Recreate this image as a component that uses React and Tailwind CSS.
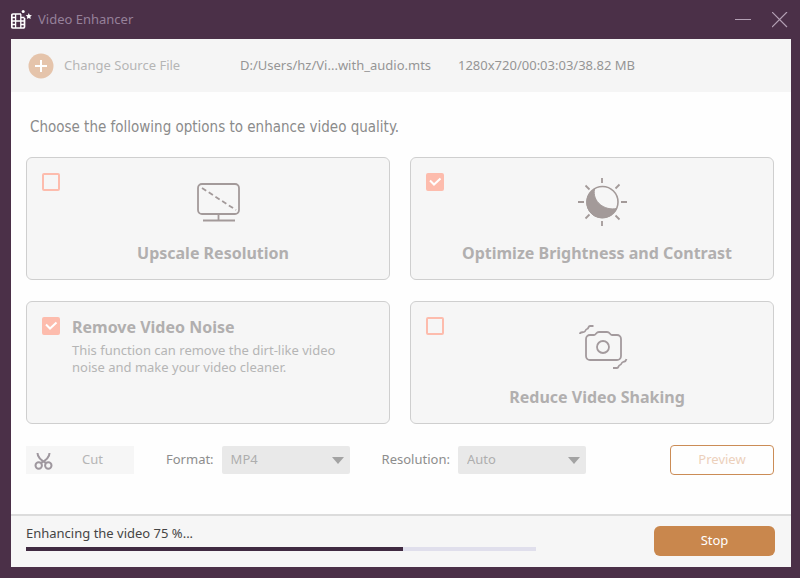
import React, { useState } from 'react';

const AppLogo = () => (
  <svg width="22" height="22" viewBox="0 0 22 22" fill="none" aria-hidden="true">
    <path d="M10 5H2a1.200 1.200 0 0 0-1.200 1.200v11.600A1.200 1.200 0 0 0 2 19h10.300a1.200 1.200 0 0 0 1.200-1.200V9" stroke="#fff" strokeWidth="1.700" />
    <path d="M4.600 5v14M9.800 5v14M4.600 12h5.200M1 8.500h3.600M1 12h3.600M1 15.500h3.600M9.800 8.500h3.700M9.800 12h3.700M9.800 15.500h3.700" stroke="#fff" strokeWidth="1.300" />
    <circle cx="12.200" cy="2.600" r="1.500" fill="#fff" />
    <path d="m17.800 4 .9 2 2.200.3-1.600 1.500.4 2.200-1.900-1.100-1.900 1.100.4-2.200-1.600-1.500 2.200-.3z" fill="#fff" />
  </svg>
);

const MonitorIcon = () => (
  <svg width="48" height="48" viewBox="0 0 48 48" fill="none" stroke="#a39a9a" strokeWidth="1.800" aria-hidden="true">
    <rect x="4" y="6" width="41" height="30" rx="4" />
    <path d="M8 10l34 22" strokeDasharray="5 3" />
    <path d="M24.500 36v6M9 42.500h32" />
  </svg>
);

const BrightnessIcon = () => (
  <svg width="48" height="48" viewBox="0 0 48 48" fill="none" stroke="#a39a99" strokeWidth="1.800" className="overflow-visible" aria-hidden="true">
    <circle cx="24.500" cy="24" r="15.500" strokeWidth="1.600" />
    <path d="M16.500 11A15.500 15.500 0 1 0 38.500 30.500C27 33 14 24 16.500 11z" fill="#a39a99" strokeWidth="1" />
    <path d="M24 0v5M24 43v5M0 24h6M43 24h6M7.500 7.500l4 4M37.500 37.500l4 4M7.500 40.500l4-4M37.500 10.500l4-4" />
  </svg>
);

const ShakeIcon = () => (
  <svg width="48" height="48" viewBox="0 0 48 48" fill="none" stroke="#a39a9d" strokeWidth="1.800" strokeLinejoin="round" className="overflow-visible" aria-hidden="true">
    <path d="M12 13h4c2 0 2-3 5-3h8c3 0 3 3 5 3h5a4 4 0 0 1 4 4v17a4 4 0 0 1-4 4H12a4 4 0 0 1-4-4V17a4 4 0 0 1 4-4z" />
    <circle cx="25" cy="25" r="6" />
    <path d="M2 12c0-2 2-1.500 4-2s1-2.500 3-3 1-3 3-3h3.500M35 46h4c2 0 1-2.500 3-3s1-2.500 3-3 3-.5 3.500-3" />
  </svg>
);

const CutIcon = () => (
  <svg width="20" height="20" viewBox="0 0 20 20" fill="none" stroke="#9e979e" strokeWidth="2" aria-hidden="true">
    <circle cx="4.700" cy="15.500" r="3.200" />
    <circle cx="14.300" cy="15.500" r="3.200" />
    <path d="M3.500 3c0 4 3 7 8.500 10M15.500 3c0 4-3 7-8.500 10" />
  </svg>
);

const Tick = ({ id, checked, onChange }) => (
  <span className="grid h-[18px] w-[18px] shrink-0">
    <input
      id={id}
      type="checkbox"
      checked={checked}
      onChange={onChange}
      className="peer col-start-1 row-start-1 h-[18px] w-[18px] appearance-none rounded-xs border-2 border-[#fdbcad] checked:bg-[#fdbcad]"
    />
    <svg viewBox="0 0 18 18" className="pointer-events-none invisible col-start-1 row-start-1 peer-checked:visible" fill="none" stroke="#fff" strokeWidth="2" aria-hidden="true">
      <path d="M4 7.500l4 4 6.500-6" />
    </svg>
  </span>
);

const OptionCard = ({ id, title, icon, checked, onChange }) => (
  <div className="flex h-[123px] rounded-md border border-[#cfcfcf] bg-[#f6f6f6] px-[15px] py-[15px]">
    <Tick id={id} checked={checked} onChange={onChange} />
    <label htmlFor={id} className="-ml-2 flex flex-1 flex-col items-center gap-[15px] pt-[5px] text-[16px] leading-6 font-bold whitespace-nowrap text-[#b1afaf]">
      <span className="pl-[10px]">{icon}</span>
      {title}
    </label>
  </div>
);

const Dropdown = ({ id, label, options, className }) => (
  <div className={`flex items-center gap-2 ${className}`}>
    <label htmlFor={id} className="text-[13px] text-[#8d8d8d]">{label}</label>
    <div className="grid w-32 items-center">
      <select id={id} className="col-start-1 row-start-1 h-7 w-full appearance-none rounded-xs bg-[#e9e9e9] px-[9px] text-[13px] text-[#aeaeae]">
        {options.map((option) => (
          <option key={option}>{option}</option>
        ))}
      </select>
      <svg width="12" height="7" viewBox="0 0 12 7" className="pointer-events-none col-start-1 row-start-1 mr-[6px] justify-self-end" aria-hidden="true">
        <path d="M0 0h12L6 7z" fill="#a3a3a3" />
      </svg>
    </div>
  </div>
);

const App = () => {
  const [selected, setSelected] = useState({ upscale: false, brightness: true, noise: true, shaking: false });
  const progress = 74;

  const toggle = (key) => setSelected({ ...selected, [key]: !selected[key] });

  return (
    <div className="flex min-h-screen flex-col bg-[#4b3048] pr-[9px] pb-[11px] pl-[11px] font-['Noto_Sans',sans-serif] text-[13px]">
      <header className="flex h-[39px] items-center">
        <AppLogo />
        <h1 className="ml-[5px] flex-1 text-[13px] text-[#96819a]">Video Enhancer</h1>
        <button type="button" aria-label="Minimize" className="mr-5">
          <svg width="18" height="16" viewBox="0 0 18 16" stroke="#b3a0b4" aria-hidden="true">
            <path d="M1 7.500h16" />
          </svg>
        </button>
        <button type="button" aria-label="Close" className="mr-[3px]">
          <svg width="16" height="16" viewBox="0 0 16 16" stroke="#b3a0b4" strokeWidth="1.200" aria-hidden="true">
            <path d="M0 0l15 15M15 0L0 15" />
          </svg>
        </button>
      </header>

      <main className="flex flex-1 flex-col bg-[#fefefe]">
        <div className="flex h-[53px] items-center bg-[#f5f5f5] pl-[17px] text-[#959595]">
          <button type="button" className="flex w-[212px] items-center gap-[10px] text-[#b5b5b5]">
            <svg width="26" height="26" viewBox="0 0 26 26" aria-hidden="true">
              <circle cx="13" cy="13" r="12.500" fill="#e5c4ab" />
              <path d="M13 7v12M7 13h12" stroke="#fff" strokeWidth="2" />
            </svg>
            Change Source File
          </button>
          <span className="w-[218px]">D:/Users/hz/Vi...with_audio.mts</span>
          <span>1280x720/00:03:03/38.82 MB</span>
        </div>

        <section className="flex flex-1 flex-col pr-[17px] pl-[15px]">
          <h2 className="pt-[23px] pb-[18px] pl-1 font-['DejaVu_Sans_Condensed','Noto_Sans',sans-serif] text-[15px] leading-6 text-[#8b8b8b]">
            Choose the following options to enhance video quality.
          </h2>

          <div className="grid grid-cols-2 gap-x-5 gap-y-[21px]">
            <OptionCard id="upscale" title="Upscale Resolution" icon={<MonitorIcon />} checked={selected.upscale} onChange={() => toggle('upscale')} />
            <OptionCard id="brightness" title="Optimize Brightness and Contrast" icon={<BrightnessIcon />} checked={selected.brightness} onChange={() => toggle('brightness')} />
            <div className="flex h-[123px] gap-3 rounded-md border border-[#cfcfcf] bg-[#f6f6f6] px-[15px] py-[15px]">
              <Tick id="noise" checked={selected.noise} onChange={() => toggle('noise')} />
              <div>
                <label htmlFor="noise" className="block text-[16px] leading-5 font-bold text-[#b1afaf]">Remove Video Noise</label>
                <p className="mt-[5px] w-[280px] leading-[17px] text-[#b5b5b5]">
                  This function can remove the dirt-like video noise and make your video cleaner.
                </p>
              </div>
            </div>
            <OptionCard id="shaking" title="Reduce Video Shaking" icon={<ShakeIcon />} checked={selected.shaking} onChange={() => toggle('shaking')} />
          </div>

          <div className="mt-[21px] mb-6 flex items-center">
            <button type="button" className="flex h-7 w-[108px] items-center gap-7 bg-[#f6f6f6] pl-2 text-[#b5b5b5]">
              <CutIcon />
              Cut
            </button>
            <Dropdown id="format" label="Format:" options={['MP4', 'MKV', 'MOV']} className="ml-8" />
            <Dropdown id="resolution" label="Resolution:" options={['Auto', '1280x720', '1920x1080']} className="ml-8" />
            <button type="button" className="ml-auto h-[30px] w-[104px] rounded-sm border border-[#cb8c56] text-[#ecd0bb]">
              Preview
            </button>
          </div>
        </section>

        <footer className="flex items-start justify-between border-t-2 border-[#dcdcdc] bg-[#f6f6f6] pt-[10px] pr-4 pb-[11px] pl-[15px]">
          <div className="w-[510px]">
            <p className="leading-[14px] text-[#454545]">Enhancing the video 75 %...</p>
            <div className="mt-[7px] h-1 bg-[#e0dfec]">
              <div className="h-1 bg-[#402a41]" style={{ width: `${progress}%` }} />
            </div>
          </div>
          <button type="button" className="h-[30px] w-[121px] rounded-md bg-[#c9874d] text-white">
            Stop
          </button>
        </footer>
      </main>
    </div>
  );
};

export default App;
